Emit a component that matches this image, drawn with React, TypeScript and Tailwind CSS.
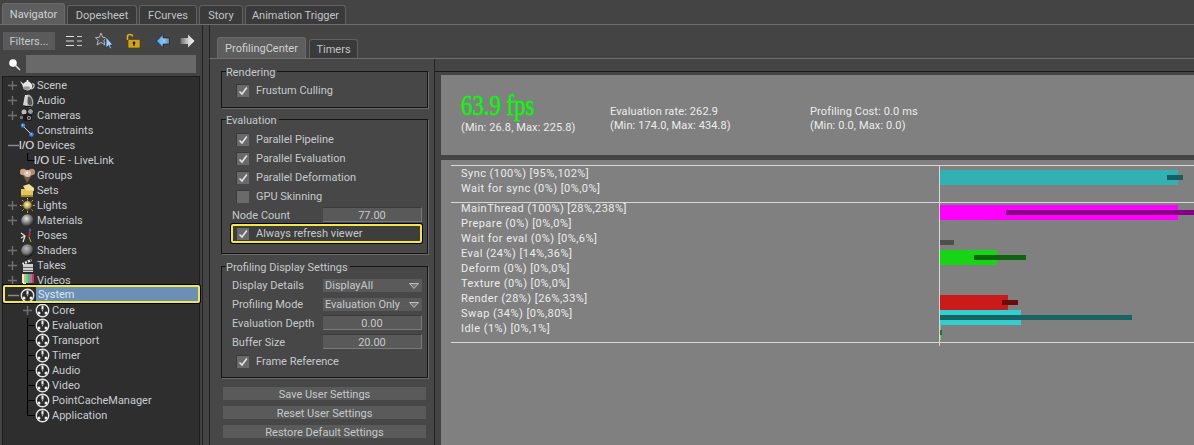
import React from "react";

const FONT = "font-['Roboto','Noto_Sans',sans-serif]";

function Sphere({ id, hi = "#e8e8e8", lo = "#222" }: { id: string; hi?: string; lo?: string }) {
  return (
    <svg width="15" height="15" viewBox="0 0 15 15">
      <defs>
        <radialGradient id={id} cx="40%" cy="35%" r="65%">
          <stop offset="0" stopColor={hi} />
          <stop offset="0.6" stopColor="#777" />
          <stop offset="1" stopColor={lo} />
        </radialGradient>
      </defs>
      <circle cx="7.5" cy="7.5" r="6.3" fill={`url(#${id})`} />
    </svg>
  );
}

function Teapot() {
  return (
    <svg width="15" height="15" viewBox="0 0 15 15">
      <path d="M0 3 L4 6 L4 10 Z" fill="#ddd" />
      <path d="M12 6 C15 5 15 10 11 11" fill="none" stroke="#ccc" strokeWidth="1.2" />
      <ellipse cx="7.5" cy="8" rx="4.8" ry="4.4" fill="#e6e6e6" />
      <ellipse cx="6.5" cy="10" rx="3.5" ry="1.8" fill="#999" />
      <circle cx="7.5" cy="3" r="1" fill="#fff" />
    </svg>
  );
}
function Speaker() {
  return (
    <svg width="15" height="15" viewBox="0 0 15 15">
      <ellipse cx="9" cy="8" rx="4.2" ry="6.5" fill="#a8a8a8" transform="rotate(-15 9 8)" />
      <ellipse cx="9.5" cy="8" rx="2.4" ry="4.4" fill="#555" transform="rotate(-15 9.5 8)" />
      <path d="M3 12 L5 2 L8 2 L7 13 Z" fill="#d4d4d4" />
      <path d="M4 13 L12 13 L11 14 L5 14 Z" fill="#111" />
    </svg>
  );
}
function Camera() {
  return (
    <svg width="15" height="15" viewBox="0 0 15 15">
      <circle cx="4" cy="4" r="3.2" fill="#bbb" stroke="#111" />
      <circle cx="10.5" cy="3.5" r="3" fill="#999" stroke="#111" />
      <rect x="3" y="6" width="9" height="7" rx="1.5" fill="#1a1a1a" />
      <circle cx="9" cy="10" r="2" fill="#aaa" />
      <circle cx="9" cy="10" r="1" fill="#111" />
      <rect x="0" y="8" width="3" height="3" fill="#777" />
    </svg>
  );
}
function Constraint() {
  return (
    <svg width="15" height="15" viewBox="0 0 15 15">
      <path d="M3 3 L11 11" stroke="#d8d8d8" strokeWidth="1" />
      <circle cx="3" cy="2.5" r="2.2" fill="#3f7fe0" />
      <circle cx="11.5" cy="11.5" r="2.2" fill="#3f7fe0" />
      <circle cx="2.6" cy="2" r="0.7" fill="#cfe2ff" />
      <circle cx="11" cy="11" r="0.7" fill="#cfe2ff" />
    </svg>
  );
}
function Groups() {
  return (
    <svg width="15" height="15" viewBox="0 0 15 15">
      <path d="M3 7 L7 15 L12 7 Z" fill="#7a5a40" />
      <circle cx="3.2" cy="4" r="3.2" fill="#c9a58a" />
      <circle cx="11.8" cy="4" r="3.2" fill="#b48c72" />
      <circle cx="7.5" cy="5.5" r="3.5" fill="#e0c0a8" />
      <circle cx="7" cy="5" r="1.2" fill="#f7e6d8" />
    </svg>
  );
}
function Folder() {
  return (
    <svg width="15" height="15" viewBox="0 0 15 15">
      <path d="M3 3 L9 1 L14 5 L14 8 L6 8 Z" fill="#f3de92" />
      <path d="M1 6 L5 6 L6 7.5 L13 7.5 L13 14 L1 14 Z" fill="#e4c45c" />
      <path d="M1 12 L13 12 L13 14 L1 14 Z" fill="#a8892f" />
    </svg>
  );
}
function Light() {
  return (
    <svg width="15" height="15" viewBox="0 0 15 15">
      <defs>
        <radialGradient id="lt" cx="45%" cy="40%" r="60%">
          <stop offset="0" stopColor="#fff7c0" />
          <stop offset="0.6" stopColor="#b8a24a" />
          <stop offset="1" stopColor="#333" />
        </radialGradient>
      </defs>
      <g stroke="#f2d21c" strokeWidth="1" strokeDasharray="1.5 0.7">
        <path d="M7.5 0V15M0 7.5H15M2.2 2.2L12.8 12.8M12.8 2.2L2.2 12.8" />
      </g>
      <circle cx="7.5" cy="7.5" r="4.8" fill="url(#lt)" stroke="#222" strokeWidth="0.5" />
    </svg>
  );
}
function Poses() {
  return (
    <svg width="15" height="15" viewBox="0 0 15 15">
      <path d="M1 5 L5 8 L3 14 M5 8 L1 10" stroke="#ddd" strokeWidth="1.3" fill="none" />
      <circle cx="10" cy="2" r="1.4" fill="#3355cc" />
      <path d="M10 3 L9 9" stroke="#b03030" strokeWidth="2" />
      <path d="M9 9 L6 13 M9 9 L11 14 M10 4 L14 5" stroke="#333" strokeWidth="1.2" fill="none" />
      <path d="M9 9 L11 14" stroke="#c9a24a" strokeWidth="1" />
    </svg>
  );
}
function Clapper() {
  return (
    <svg width="15" height="15" viewBox="0 0 15 15">
      <rect x="3" y="6" width="10" height="8" fill="#cfcfcf" />
      <rect x="3" y="9" width="10" height="1" fill="#666" />
      <rect x="3" y="12" width="10" height="1" fill="#666" />
      <path d="M2 5 L11 1 L12 3 L3 7 Z" fill="#eee" />
      <path d="M4 4 L5 6 M7 3 L8 5 M10 1.5 L11 3.5" stroke="#222" strokeWidth="1.2" />
    </svg>
  );
}
function Bars() {
  return (
    <svg width="15" height="15" viewBox="0 0 15 15">
      <rect x="2" y="1" width="2" height="9" fill="#e8e8e8" />
      <rect x="4" y="1" width="2" height="9" fill="#d7c23a" />
      <rect x="6" y="1" width="2" height="9" fill="#4ccfc9" />
      <rect x="8" y="1" width="2" height="9" fill="#4cc04c" />
      <rect x="10" y="1" width="2" height="9" fill="#d05ad0" />
      <rect x="12" y="1" width="2" height="9" fill="#c94040" />
      <rect x="2" y="10" width="12" height="4" fill="#2a2a2a" />
      <rect x="3" y="10" width="3" height="4" fill="#eee" />
    </svg>
  );
}
function SystemIcon() {
  return (
    <svg width="15" height="15" viewBox="0 0 15 15">
      <circle cx="7.5" cy="7.5" r="6.2" fill="#2b2b2b" stroke="#e6e6e6" strokeWidth="1.4" />
      <rect x="6.5" y="2.5" width="2" height="4" fill="#f0f0f0" />
      <circle cx="4" cy="10" r="1.5" fill="#f0f0f0" />
      <circle cx="11" cy="10" r="1.5" fill="#f0f0f0" />
      <circle cx="7.5" cy="7.7" r="0.7" fill="#bbb" />
    </svg>
  );
}
function IO() {
  return (
    <span className="-translate-x-[1px] font-['Liberation_Sans',sans-serif] text-[11.5px] leading-[15px] text-[#e4e4e4] whitespace-nowrap">
      I/O
    </span>
  );
}

type Exp = "plus" | "minus" | "none" | "tee" | "last" | "plusChild";

function Expander({ kind }: { kind: Exp }) {
  return (
    <svg width="15" height="15" viewBox="0 0 15 15" className="shrink-0">
      {kind === "plus" && <path d="M3 7.5H12M7.5 3V12" stroke="#6f6f6f" strokeWidth="1.5" />}
      {kind === "minus" && <path d="M3 7.5H14" stroke="#8a8a8a" strokeWidth="1.5" />}
      {kind === "plusChild" && <path d="M3 7.5H12M7.5 3V12" stroke="#6f6f6f" strokeWidth="1.5" />}
      {kind === "tee" && <path d="M7.5 0V15M7.5 7.5H15" stroke="#000" strokeWidth="1" />}
      {kind === "last" && <path d="M7.5 0V7.5H15" stroke="#000" strokeWidth="1" fill="none" />}
    </svg>
  );
}

function TreeRow({
  child,
  exp,
  icon,
  label,
}: {
  child?: boolean;
  exp: Exp;
  icon: React.ReactNode;
  label: string;
}) {
  return (
    <div className={`flex h-[15px] items-center ${child ? "pl-[17px]" : "pl-[2px]"}`}>
      <Expander kind={exp} />
      <span className="flex h-[15px] w-[15px] shrink-0 items-center justify-center">{icon}</span>
      <span className="ml-[2px] whitespace-nowrap text-[#c8ccd0]">{label}</span>
    </div>
  );
}

function Tab({ label, active, w }: { label: string; active?: boolean; w: string }) {
  return (
    <div
      className={`flex items-center justify-center rounded-t-[3px] border-t border-x pt-[1px] ${w} ${
        active
          ? "h-[21px] border-[#6a6a6a] bg-[#5e5e5e] text-[#cfd2d4]"
          : "h-[19px] border-[#606060] bg-[#3a3a3a] text-[#c0c4c8]"
      }`}
    >
      {label}
    </div>
  );
}

function Check({ on = true }: { on?: boolean }) {
  return (
    <span className="flex h-[13px] w-[13px] shrink-0 items-center justify-center border-t border-l border-[#3a3a3a] bg-[#6a6a6a]">
      {on && (
        <svg width="10" height="10" viewBox="0 0 10 10">
          <path d="M1.5 5.5 L4 8 L8.8 1.5" fill="none" stroke="#e4e4e4" strokeWidth="1.6" />
        </svg>
      )}
    </span>
  );
}

function CheckRow({ label, on = true }: { label: string; on?: boolean }) {
  return (
    <div className="flex h-[19px] items-center gap-[7px] pl-[14px]">
      <Check on={on} />
      <span className="whitespace-nowrap text-[#c6c9cb]">{label}</span>
    </div>
  );
}

function Legend({ title }: { title: string }) {
  return (
    <span className="absolute left-[4px] top-[-7px] bg-[#474747] pr-[2px] leading-[15px] text-[#c6c9cb] whitespace-nowrap">
      {title}
    </span>
  );
}

function NumRow({ label, value }: { label: string; value: string }) {
  return (
    <div className="flex h-[19px] items-center pl-[10px]">
      <span className="w-[91px] whitespace-nowrap text-[#c6c9cb]">{label}</span>
      <span className="mb-[2px] flex h-[15px] w-[99px] items-center justify-center border-t border-r border-b border-[#3a3a3a] border-r-[#7a7a7a] border-b-[#7a7a7a] bg-[#595959] pt-[1px] text-[#c6c9cb]">
        {value}
      </span>
    </div>
  );
}

function SelectRow({ label, value }: { label: string; value: string }) {
  return (
    <div className="flex h-[19px] items-center pl-[10px]">
      <span className="w-[91px] whitespace-nowrap text-[#c6c9cb]">{label}</span>
      <span className="flex h-[13px] w-[99px] items-center justify-between bg-[#5a5a5a] pl-[2px] pr-[3px] text-[#c6c9cb]">
        <span className="whitespace-nowrap">{value}</span>
        <svg width="10" height="6" viewBox="0 0 10 6">
          <path d="M0.5 0.5H9.5L5 5.5Z" fill="#777" stroke="#d0d0d0" strokeWidth="0.8" />
        </svg>
      </span>
    </div>
  );
}

function Btn({ label }: { label: string }) {
  return (
    <div className="flex h-[13px] items-center justify-center bg-[#5a5a5a] pt-[1px] text-[#c6c9cb] whitespace-nowrap">{label}</div>
  );
}

function Line({ t, tight, wide }: { t: string; tight?: boolean; wide?: boolean }) {
  return (
    <div
      className={`whitespace-nowrap ${tight ? "h-[14px] leading-[14px]" : "h-[15px] leading-[15px]"} ${
        wide ? "tracking-[0.45px]" : "tracking-[0.12px]"
      }`}
    >
      {t}
    </div>
  );
}

function Chart() {
  return (
    <svg className="absolute left-[10px] top-0" width="743" height="190" viewBox="451 160 743 190">
      <g shapeRendering="crispEdges">
        <path d="M451 165.5H1194M451 202.5H1194M451 342.5H1194" stroke="#d8d8d8" />
        <path d="M939.5 165V346" stroke="#d8d8d8" />
        <rect x="940" y="170" width="238" height="15" fill="#31b1b1" />
        <rect x="1167" y="175" width="16" height="5" fill="#185d62" />
        <rect x="940" y="205" width="238" height="15" fill="#ff00ff" />
        <rect x="1006" y="210" width="188" height="5" fill="#860086" />
        <rect x="940" y="240" width="14" height="5" fill="#4e4e4e" />
        <rect x="940" y="250" width="57" height="15" fill="#17d417" />
        <rect x="974" y="255" width="52" height="5" fill="#0f640f" />
        <rect x="940" y="295" width="68" height="15" fill="#cb1a1a" />
        <rect x="1002" y="300" width="16" height="5" fill="#680c0c" />
        <rect x="940" y="310" width="81" height="15" fill="#31cfcf" />
        <rect x="940" y="315" width="192" height="5" fill="#1a6363" />
        <rect x="940" y="325" width="1" height="15" fill="#6fd06f" />
        <rect x="940" y="330" width="2" height="5" fill="#2f6a2f" />
      </g>
    </svg>
  );
}

export default function App() {
  return (
    <div className={`${FONT} flex h-[445px] w-[1194px] flex-col overflow-hidden bg-[#444444] text-[11px] leading-[15px]`}>
      {/* Main tabs */}
      <div className="flex h-[25px] shrink-0 items-end gap-[2px] border-b border-[#6e6e6e] pl-[2px]">
        <Tab label="Navigator" active w="w-[63px]" />
        <Tab label="Dopesheet" w="w-[70px]" />
        <Tab label="FCurves" w="w-[58px]" />
        <Tab label="Story" w="w-[44px]" />
        <Tab label="Animation Trigger" w="w-[101px]" />
      </div>

      <div className="flex min-h-0 flex-1">
        {/* Navigator */}
        <div className="flex w-[203px] shrink-0 flex-col border-r border-[#222]">
          <div className="flex h-[26px] items-center pl-[3px] pt-[6px]">
            <div className="flex h-[18px] w-[52px] items-center justify-center bg-[#5a5a5a] pt-[1px] text-[#c6c9cb]">Filters...</div>
            <svg className="ml-[11px]" width="17" height="12" viewBox="0 0 17 12">
              <path d="M0 1.5H8M0 6H8M0 10.5H8" stroke="#e0e0e0" strokeWidth="1" />
              <path d="M11 1.5H16M11 6H16M11 10.5H16" stroke="#cfcfcf" strokeWidth="1" />
            </svg>
            <svg className="ml-[12px]" width="20" height="18" viewBox="0 0 20 18">
              <path d="M6 1 L7.8 5.4 L12 5.6 L8.8 8.4 L10 13 L6 10.4 L2 13 L3.2 8.4 L0.4 5.6 L4.2 5.4 Z" fill="#4a4a4a" stroke="#d0d0d0" strokeWidth="0.8" />
              <path d="M11 5 L11 16 L13.5 13.5 L15 17 L16.5 16 L15 13 L18 13 Z" fill="#a8cdf0" stroke="#24405e" strokeWidth="0.8" />
            </svg>
            <svg className="ml-[10px]" width="16" height="16" viewBox="0 0 16 16">
              <path d="M2.5 7 V3.5 C2.5 0.8 7.5 0.8 7.5 3.5" fill="none" stroke="#e0b020" strokeWidth="1.6" />
              <rect x="3" y="6.5" width="12" height="8.5" rx="1" fill="#d2a418" stroke="#5c4608" strokeWidth="0.7" />
              <circle cx="9" cy="10" r="1.4" fill="#2a2006" />
              <rect x="8.4" y="10" width="1.2" height="3" fill="#2a2006" />
            </svg>
            <svg className="ml-[15px]" width="14" height="14" viewBox="0 0 14 14">
              <defs>
                <linearGradient id="ba" x1="0" x2="1" y1="0" y2="0">
                  <stop offset="0" stopColor="#4fa6ee" />
                  <stop offset="0.6" stopColor="#8cc6f2" />
                  <stop offset="1" stopColor="#6f7f8c" />
                </linearGradient>
              </defs>
              <path d="M0.5 7 L7 0.5 V4 H13.5 V10 H7 V13.5 Z" fill="url(#ba)" stroke="#0d1a28" strokeWidth="0.6" />
            </svg>
            <svg className="ml-[10px]" width="15" height="14" viewBox="0 0 15 14">
              <defs>
                <linearGradient id="wa" x1="0" x2="1" y1="0" y2="0">
                  <stop offset="0" stopColor="#6e6e6e" />
                  <stop offset="0.6" stopColor="#d8d8d8" />
                  <stop offset="1" stopColor="#f4f4f4" />
                </linearGradient>
              </defs>
              <path d="M14.5 7 L8 0.5 V4 H0.5 V10 H8 V13.5 Z" fill="url(#wa)" />
            </svg>
          </div>
          <div className="flex h-[22px] items-center pl-[8px] pt-[4px]">
            <svg width="13" height="13" viewBox="0 0 13 13">
              <circle cx="5" cy="5" r="3.8" fill="#fff" />
              <path d="M7.5 7.5 L12 12" stroke="#ddd" strokeWidth="1.6" />
            </svg>
            <div className="ml-[5px] h-[18px] w-[170px] bg-[#696969]" />
          </div>
          {/* Tree */}
          <div className="ml-[2px] mt-[3px] mr-[2px] flex flex-1 flex-col border-t border-l border-r border-[#1c1c1c] bg-[#2e2e2e] pt-[1px]">
            <TreeRow exp="plus" icon={<Teapot />} label="Scene" />
            <TreeRow exp="plus" icon={<Speaker />} label="Audio" />
            <TreeRow exp="plus" icon={<Camera />} label="Cameras" />
            <TreeRow exp="none" icon={<Constraint />} label="Constraints" />
            <TreeRow exp="minus" icon={<IO />} label="Devices" />
            <TreeRow child exp="last" icon={<IO />} label="UE - LiveLink" />
            <TreeRow exp="none" icon={<Groups />} label="Groups" />
            <TreeRow exp="none" icon={<Folder />} label="Sets" />
            <TreeRow exp="plus" icon={<Light />} label="Lights" />
            <TreeRow exp="plus" icon={<Sphere id="m1" />} label="Materials" />
            <TreeRow exp="none" icon={<Poses />} label="Poses" />
            <TreeRow exp="plus" icon={<Sphere id="m2" hi="#bbb" lo="#111" />} label="Shaders" />
            <TreeRow exp="plus" icon={<Clapper />} label="Takes" />
            <TreeRow exp="plus" icon={<Bars />} label="Videos" />
            <div className="relative">
              <TreeRow exp="minus" icon={<SystemIcon />} label="" />
              <div className="absolute left-0 -right-[1px] -top-[3px] bottom-0 rounded-[2px] border-2 border-[#f2e84a] shadow-[0_0_0_1px_#000]">
                <div className="ml-[31px] flex h-full items-center bg-[#6c8fb5] pl-[2px] pt-[1px] text-[#d8e4ee]">System</div>
              </div>
            </div>
            <TreeRow child exp="plusChild" icon={<SystemIcon />} label="Core" />
            <TreeRow child exp="tee" icon={<SystemIcon />} label="Evaluation" />
            <TreeRow child exp="tee" icon={<SystemIcon />} label="Transport" />
            <TreeRow child exp="tee" icon={<SystemIcon />} label="Timer" />
            <TreeRow child exp="tee" icon={<SystemIcon />} label="Audio" />
            <TreeRow child exp="tee" icon={<SystemIcon />} label="Video" />
            <TreeRow child exp="tee" icon={<SystemIcon />} label="PointCacheManager" />
            <TreeRow child exp="last" icon={<SystemIcon />} label="Application" />
          </div>
        </div>

        {/* Right side */}
        <div className="flex min-w-0 flex-1 flex-col">
          <div className="ml-[6px] flex h-[34px] shrink-0 items-end gap-[3px] border-b border-l border-[#6e6e6e] border-l-[#222] pl-[7px]">
            <Tab label="ProfilingCenter" active w="w-[89px]" />
            <Tab label="Timers" w="w-[49px]" />
          </div>
          <div className="flex min-h-0 flex-1">
            {/* Settings column */}
            <div className="ml-[6px] w-[225px] shrink-0 border-l border-[#222] bg-[#474747] pl-[11px] pr-[6px] pt-[12px]">
              <div className="relative h-[37px] border border-[#141414] pt-[9px] shadow-[1px_1px_0_#6a6a6a]">
                <Legend title="Rendering" />
                <CheckRow label="Frustum Culling" />
              </div>
              <div className="relative mt-[11px] h-[135px] border border-[#141414] pt-[10px] shadow-[1px_1px_0_#6a6a6a]">
                <Legend title="Evaluation" />
                <CheckRow label="Parallel Pipeline" />
                <CheckRow label="Parallel Evaluation" />
                <CheckRow label="Parallel Deformation" />
                <CheckRow label="GPU Skinning" on={false} />
                <NumRow label="Node Count" value="77.00" />
                <div className="-mt-[1px] ml-[9px] mr-[5px] flex h-[19px] items-center gap-[7px] rounded-[2px] border-2 border-[#f2e84a] bg-[#3e3e3e] pl-[3px] shadow-[0_0_0_1px_#000]">
                  <Check />
                  <span className="whitespace-nowrap text-[#c6c9cb]">Always refresh viewer</span>
                </div>
              </div>
              <div className="relative mt-[12px] h-[112px] border border-[#141414] pt-[9px] shadow-[1px_1px_0_#6a6a6a]">
                <Legend title="Profiling Display Settings" />
                <SelectRow label="Display Details" value="DisplayAll" />
                <SelectRow label="Profiling Mode" value="Evaluation Only" />
                <NumRow label="Evaluation Depth" value="0.00" />
                <NumRow label="Buffer Size" value="20.00" />
                <CheckRow label="Frame Reference" />
              </div>
              <div className="mt-[9px] flex flex-col gap-[6px] pl-[2px] pr-[2px]">
                <Btn label="Save User Settings" />
                <Btn label="Reset User Settings" />
                <Btn label="Restore Default Settings" />
              </div>
            </div>
            {/* Profiling panels */}
            <div className="min-w-0 flex-1 border-l border-[#222] pt-[12px]">
              <div className="border-t border-[#1a1a1a] pl-[6px] pt-[3px]">
                <div className="flex h-[80px] bg-[#808080] pl-[20px] text-[#ececec]">
                  <div className="w-[149px] pt-[15px]">
                    <div className="origin-left scale-x-[0.76] font-['Liberation_Serif',serif] text-[30px] leading-[30px] text-[#00ff00] [-webkit-text-stroke:0.4px_#00ff00] whitespace-nowrap">
                      63.9 fps
                    </div>
                    <Line t="(Min: 26.8, Max: 225.8)" />
                  </div>
                  <div className="w-[200px] pt-[30px]">
                    <Line tight t="Evaluation rate: 262.9" />
                    <Line tight t="(Min: 174.0, Max: 434.8)" />
                  </div>
                  <div className="pt-[30px]">
                    <Line tight t="Profiling Cost: 0.0 ms" />
                    <Line tight t="(Min: 0.0, Max: 0.0)" />
                  </div>
                </div>
                <div className="relative mt-[5px] h-[285px] overflow-hidden bg-[#808080] pl-[20px] pt-[6px] text-[#ececec]">
                  <Chart />
                  <Line wide t="Sync (100%) [95%,102%]" />
                  <Line wide t="Wait for sync (0%) [0%,0%]" />
                  <div className="h-[5px]" />
                  <Line wide t="MainThread (100%) [28%,238%]" />
                  <Line wide t="Prepare (0%) [0%,0%]" />
                  <Line wide t="Wait for eval (0%) [0%,6%]" />
                  <Line wide t="Eval (24%) [14%,36%]" />
                  <Line wide t="Deform (0%) [0%,0%]" />
                  <Line wide t="Texture (0%) [0%,0%]" />
                  <Line wide t="Render (28%) [26%,33%]" />
                  <Line wide t="Swap (34%) [0%,80%]" />
                  <Line wide t="Idle (1%) [0%,1%]" />
                </div>
              </div>
            </div>
          </div>
        </div>
      </div>
    </div>
  );
}
